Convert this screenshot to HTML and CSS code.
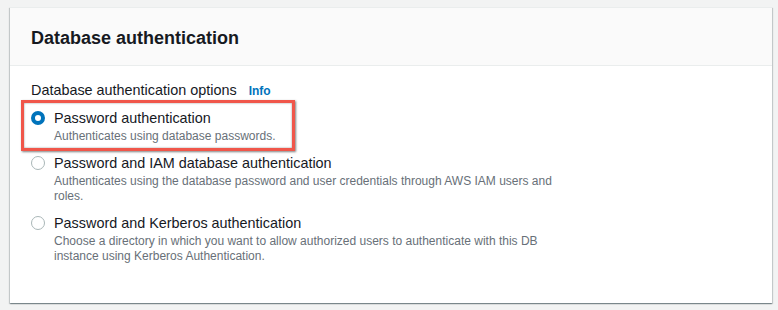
FILE: index.html
```html
<!DOCTYPE html>
<html lang="en">
<head>
  <meta charset="UTF-8">
  <meta name="viewport" content="width=device-width, initial-scale=1.0">
  <title>Database authentication</title>
  <link rel="stylesheet" href="styles.css">
</head>
<body>
  <div class="container">
    <div class="container-header">
      <h2>Database authentication</h2>
    </div>

    <div class="container-body">
      <div class="field-label">
        <span>Database authentication options</span>
        <a href="#" class="info-link">Info</a>
      </div>

      <div class="radio-group">
        <label class="radio-option highlighted">
          <input type="radio" name="auth" checked>
          <span class="radio-control"></span>
          <span class="radio-text">
            <span class="radio-title">Password authentication</span>
            <span class="radio-desc">Authenticates using database passwords.</span>
          </span>
        </label>

        <label class="radio-option">
          <input type="radio" name="auth">
          <span class="radio-control"></span>
          <span class="radio-text">
            <span class="radio-title">Password and IAM database authentication</span>
            <span class="radio-desc">Authenticates using the database password and user credentials through AWS IAM users and roles.</span>
          </span>
        </label>

        <label class="radio-option">
          <input type="radio" name="auth">
          <span class="radio-control"></span>
          <span class="radio-text">
            <span class="radio-title">Password and Kerberos authentication</span>
            <span class="radio-desc">Choose a directory in which you want to allow authorized users to authenticate with this DB instance using Kerberos Authentication.</span>
          </span>
        </label>
      </div>
    </div>
  </div>
</body>
</html>
```

FILE: styles.css
```css
body {
  margin: 0;
  padding: 7px 6px 7px 10px;
  background-color: #f2f3f3;
  font-family: "Liberation Sans", Arial, sans-serif;
  color: #16191f;
}
.container {
  background-color: #fff;
  border-top: 1px solid #eaeded;
  box-shadow: 0 1px 1px 0 rgba(0,28,36,0.3), 1px 1px 1px 0 rgba(0,28,36,0.15), -1px 1px 1px 0 rgba(0,28,36,0.15);
}
.container-header {
  background-color: #fafafa;
  border-bottom: 1px solid #eaeded;
  height: 58px;
  padding: 0 21px;
  box-sizing: border-box;
  display: flex;
  align-items: center;
}
.container-header h2 {
  margin: 2px 0 0;
  font-size: 18px;
  line-height: 22px;
  font-weight: bold;
}
.container-body {
  padding: 14px 21px 39px;
}
.field-label {
  font-size: 14.4px;
  line-height: 20px;
  margin-bottom: 7px;
}
.info-link {
  margin-left: 8px;
  font-size: 12px;
  font-weight: bold;
  color: #0073bb;
  text-decoration: none;
}
.radio-group {
  display: flex;
  flex-direction: column;
  gap: 9px;
}
.radio-option {
  position: relative;
  display: flex;
  align-items: flex-start;
  gap: 9px;
  cursor: pointer;
}
.radio-option input {
  display: none;
}
.radio-control {
  flex: none;
  width: 14px;
  height: 14px;
  margin-top: 3px;
  border: 1px solid #aab7b8;
  border-radius: 50%;
  box-sizing: border-box;
  background-color: #fff;
}
.radio-option input:checked + .radio-control {
  border: 4px solid #0073bb;
}
.radio-text {
  display: flex;
  flex-direction: column;
}
.radio-title {
  font-size: 14.4px;
  line-height: 20px;
}
.radio-desc {
  margin-top: 1px;
  max-width: 515px;
  font-size: 12px;
  line-height: 15px;
  color: #687078;
}
.highlighted::after {
  content: "";
  position: absolute;
  left: -10px;
  top: -8px;
  width: 274px;
  height: 51px;
  box-sizing: border-box;
  border: 3px solid #f0564a;
  box-shadow: 1px 1px 2px rgba(0,0,0,0.5), inset 0 0 2px rgba(0,0,0,0.45);
  pointer-events: none;
}
```
